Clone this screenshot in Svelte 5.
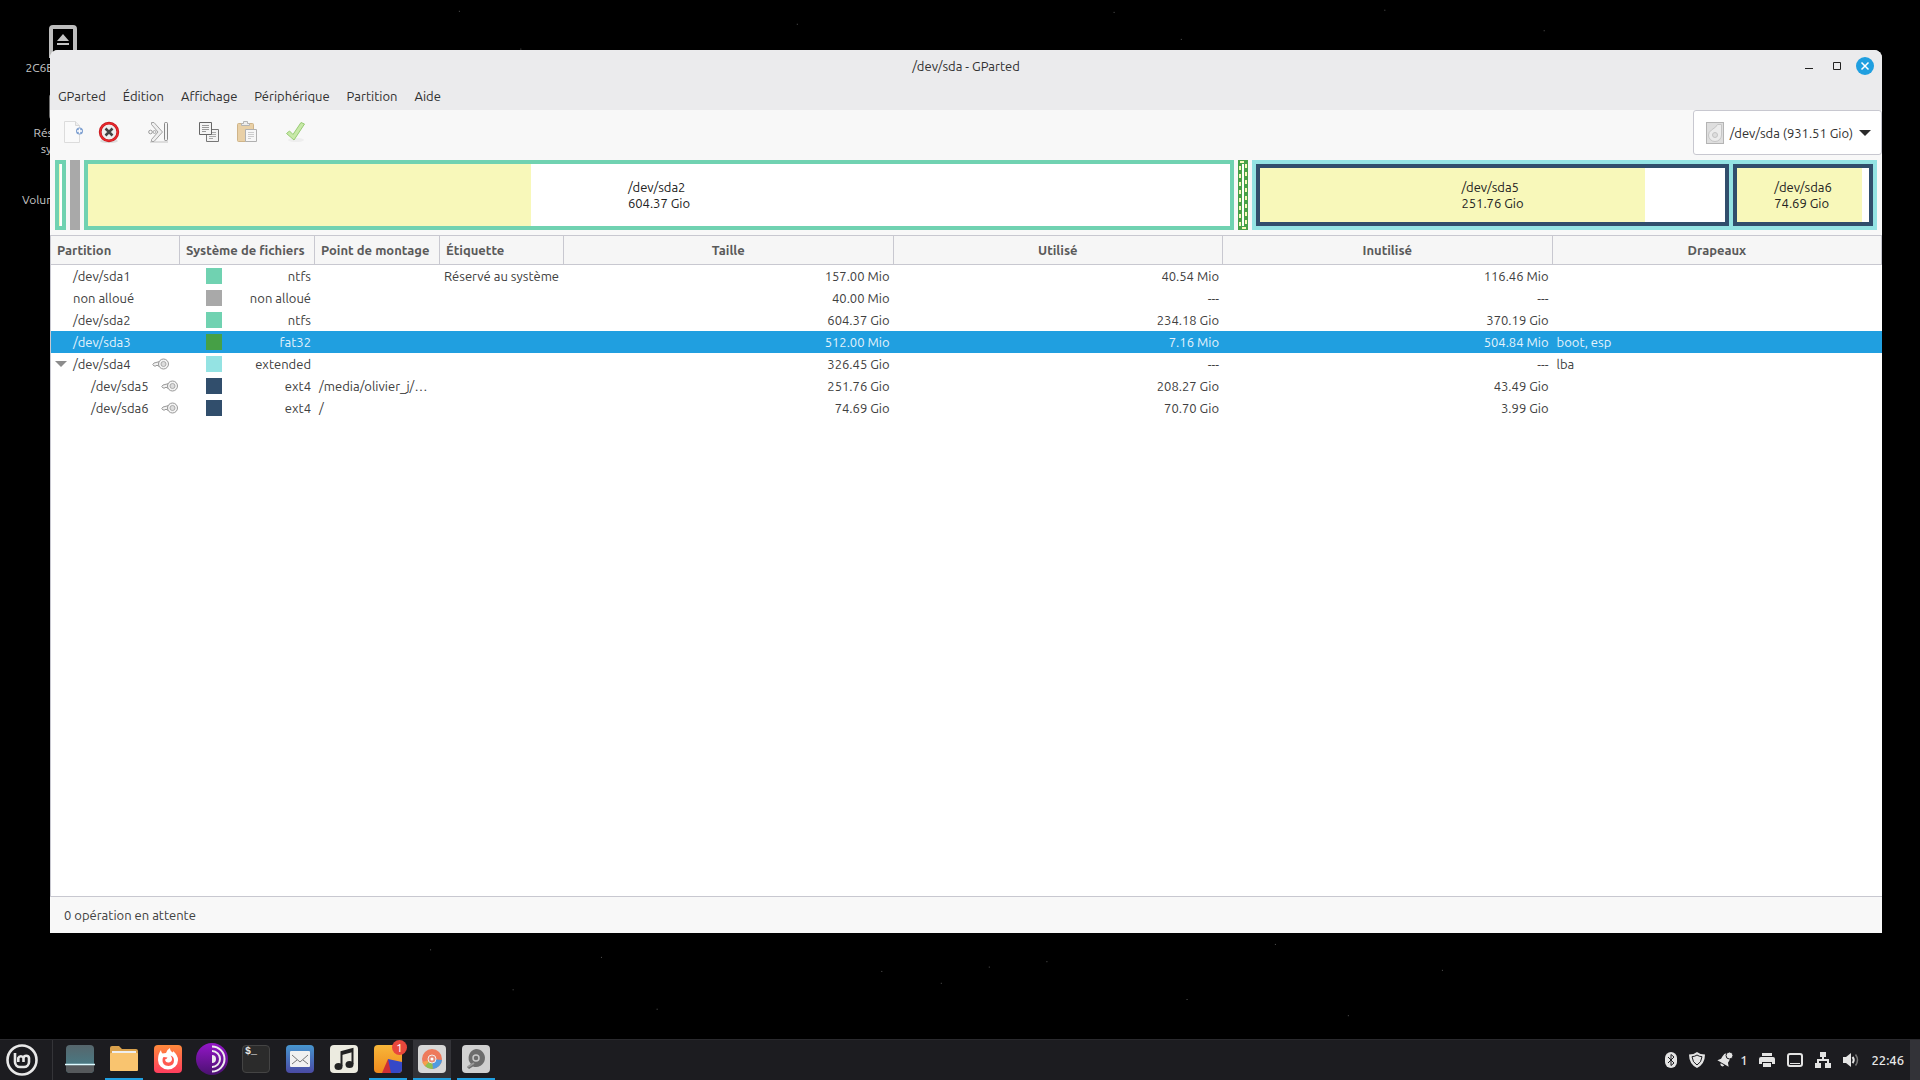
<script lang="ts">
	interface Row {
		name: string;
		depth: number;
		locked?: boolean;
		expander?: boolean;
		selected?: boolean;
		fs: string;
		color: string;
		mount?: string;
		label?: string;
		size: string;
		used: string;
		unused: string;
		flags?: string;
	}

	const menus = ['GParted', 'Édition', 'Affichage', 'Périphérique', 'Partition', 'Aide'];

	const rows: Row[] = [
		{ name: '/dev/sda1', depth: 0, fs: 'ntfs', color: '#70d2b1', label: 'Réservé au système', size: '157.00 Mio', used: '40.54 Mio', unused: '116.46 Mio' },
		{ name: 'non alloué', depth: 0, fs: 'non alloué', color: '#a9a9a9', size: '40.00 Mio', used: '---', unused: '---' },
		{ name: '/dev/sda2', depth: 0, fs: 'ntfs', color: '#70d2b1', size: '604.37 Gio', used: '234.18 Gio', unused: '370.19 Gio' },
		{ name: '/dev/sda3', depth: 0, selected: true, fs: 'fat32', color: '#46a046', size: '512.00 Mio', used: '7.16 Mio', unused: '504.84 Mio', flags: 'boot, esp' },
		{ name: '/dev/sda4', depth: 0, locked: true, expander: true, fs: 'extended', color: '#94e3e3', size: '326.45 Gio', used: '---', unused: '---', flags: 'lba' },
		{ name: '/dev/sda5', depth: 1, locked: true, fs: 'ext4', color: '#314e6c', mount: '/media/olivier_j/…', size: '251.76 Gio', used: '208.27 Gio', unused: '43.49 Gio' },
		{ name: '/dev/sda6', depth: 1, locked: true, fs: 'ext4', color: '#314e6c', mount: '/', size: '74.69 Gio', used: '70.70 Gio', unused: '3.99 Gio' },
	];

	// faint stars of the wallpaper, in percent of the screen
	const stars = [
		[23.9, 1], [27.1, 4.5], [41.5, 2.2], [58, 1.1], [61.5, 3.6], [72.1, 0.9], [80.4, 2.8], [22.4, 87.9],
		[26.7, 91.6], [31.3, 88.6], [34.2, 93.4], [45.9, 89.9], [49, 91], [51.5, 89.5], [54.5, 89],
		[61.8, 92.5], [66.4, 87.4], [70.2, 94], [75.1, 89.8],
	];
</script>

<svelte:head>
	<title>/dev/sda - GParted</title>
</svelte:head>

<div class="desktop">
	<svg class="stars" aria-hidden="true">
		{#each stars as [x, y]}
			<rect x="{x}%" y="{y}%" width="1" height="1" fill="#555" />
		{/each}
	</svg>

	<div class="launchers">
		<div class="launcher">
			<svg width="28" height="33" viewBox="0 0 28 33">
				<rect x="2" y="2" width="24" height="42" rx="2" fill="none" stroke="#bdbdbd" stroke-width="4" />
				<path d="M14 9l6 7H8zM8 18h12v2H8z" fill="#c4c4c4" />
			</svg>
			<span>2C6E1C5F6E1</span>
		</div>
		<div class="launcher">
			<svg width="28" height="33" viewBox="0 0 28 33">
				<rect x="2" y="4" width="24" height="24" rx="2" fill="none" stroke="#bdbdbd" stroke-width="4" />
			</svg>
			<span>Réservé au<br />système</span>
		</div>
		<div class="launcher bare">
			<span>Volume 120 Go</span>
		</div>
	</div>

	<main class="window">
		<header class="titlebar">
			<h1>/dev/sda - GParted</h1>
			<div class="controls">
				<button aria-label="Réduire"><svg width="18" height="18"><path d="M5 11.500h8" stroke="#222" /></svg></button>
				<button aria-label="Agrandir"><svg width="18" height="18"><path d="M5.500 5.500h7v7h-7z" fill="none" stroke="#222" /></svg></button>
				<button aria-label="Fermer">
					<svg width="18" height="18"><circle cx="9" cy="9" r="9" fill="#209fe0" /><path d="M5.500 5.500l7 7M12.500 5.500l-7 7" stroke="#fff" stroke-width="1.500" /></svg>
				</button>
			</div>
		</header>

		<nav class="menubar">
			{#each menus as menu}
				<button>{menu}</button>
			{/each}
		</nav>

		<div class="toolbar">
			<div class="tools">
				<button aria-label="Nouveau" disabled>
					<svg width="24" height="24" viewBox="0 0 24 24">
						<path d="M3.500 1.500h11l4 4v17h-15z" fill="#fafafa" stroke="#dcdcdc" />
						<path d="M14.500 1.500v4h4" fill="#eee" stroke="#d8d8d8" />
						<circle cx="18.500" cy="11" r="3.500" fill="#7d9fd0" />
						<path d="M18.500 8.500v5M16 11h5" stroke="#fff" stroke-width="1.500" />
					</svg>
				</button>
				<button class="second" aria-label="Supprimer">
					<svg width="24" height="24" viewBox="0 0 24 24">
						<ellipse cx="12" cy="21" rx="9" ry="2" fill="#ddd" />
						<circle cx="12" cy="12" r="8.800" fill="#eee" stroke="#c4161c" stroke-width="2.800" />
						<circle cx="12" cy="12" r="8.800" fill="none" stroke="#e8282c" stroke-width="1.500" />
						<path d="M8.500 8.500l7 7M15.500 8.500l-7 7" stroke="#444" stroke-width="2.500" />
					</svg>
				</button>
				<button class="third" aria-label="Redimensionner/Déplacer" disabled>
					<svg width="24" height="24" viewBox="0 0 24 24">
						<path d="M4 22h18" stroke="#ddd" stroke-width="2" />
						<path d="M5.500 2.500h2.500l8.500 9.500-8.500 9.500H5.500v-2l6.500-7.500-6.500-7.500z" fill="#efefef" stroke="#a4a4a4" />
						<circle cx="4.500" cy="12" r="1.800" fill="none" stroke="#999" />
						<circle cx="8.500" cy="12" r="1.500" fill="#eee" stroke="#aaa" />
						<rect x="18.500" y="2.500" width="3" height="18" rx="1" fill="#f4f4f4" stroke="#888" />
					</svg>
				</button>
				<button class="fourth" aria-label="Copier" disabled>
					<svg width="24" height="24" viewBox="0 0 24 24">
						<path d="M9.500 9.500h12v12h-12z" fill="#f4f4f4" stroke="#777" />
						<path d="M12 12.500h7M12 14.500h7M12 16.500h7M12 18.500h4" stroke="#aaa" />
						<path d="M2.500 2.500h12v12h-12z" fill="#f4f4f4" stroke="#666" />
						<path d="M5 5.500h7M5 7.500h7M5 9.500h7M5 11.500h4" stroke="#999" />
					</svg>
				</button>
				<button class="fifth" aria-label="Coller" disabled>
					<svg width="24" height="24" viewBox="0 0 24 24">
						<rect x="2.500" y="3.500" width="16" height="18" rx="1" fill="#e9d0a6" stroke="#cfb489" />
						<path d="M6.500 5.500v-2h2v-2h4v2h2v2z" fill="#eee" stroke="#b4b4b4" />
						<path d="M10.500 9.500h11v12h-11z" fill="#f7f7f7" stroke="#b0b0b0" />
						<path d="M13 12.500h6M13 14.500h6M13 16.500h6M13 18.500h3" stroke="#ccc" />
					</svg>
				</button>
				<button class="third" aria-label="Appliquer" disabled>
					<svg width="24" height="24" viewBox="0 0 24 24">
						<ellipse cx="12" cy="20" rx="8" ry="2" fill="#eee" />
						<path d="M2.500 13.500l3-2.500 3.500 3.500 8-12 3.500 1.500-10.500 16z" fill="#c8e9a8" stroke="#98cc74" stroke-linejoin="round" />
					</svg>
				</button>
			</div>
			<button class="device" aria-haspopup="listbox">
				<svg width="18" height="22" viewBox="0 0 18 22">
					<rect x=".5" y=".5" width="17" height="21" fill="#dedede" stroke="#b4b4b4" />
					<path d="M15.500 2.500V13a6.500 6.500 0 0 1-13 0q0-3 3-5 5-3 6-5.500z" fill="#ececec" stroke="#c6c6c6" />
					<circle cx="9" cy="13" r="2.500" fill="#dedede" stroke="#c4c4c4" />
				</svg>
				<span>/dev/sda (931.51 Gio)</span>
				<svg width="12" height="8"><path d="M0 1h12l-6 6z" fill="#2a2a2a" /></svg>
			</button>
		</div>

		<div class="disk">
			<div class="part ntfs tiny">
				<div class="used" style:width="25.8%"></div>
			</div>
			<div class="part free"></div>
			<div class="part ntfs sda2">
				<div class="used" style:width="38.8%"></div>
				<p>/dev/sda2<br />604.37 Gio</p>
			</div>
			<div class="part sda3">
				<svg width="10" height="70">
					<rect x="4" y="4" width="2" height="62" fill="#fff" />
					<rect x="2" y="2" width="6" height="66" fill="none" stroke="#f8f8ba" stroke-width="2" stroke-dasharray="4 4" />
				</svg>
			</div>
			<div class="part extended">
				<div class="part ext4 sda5">
					<div class="used" style:width="82.7%"></div>
					<p>/dev/sda5<br />251.76 Gio</p>
				</div>
				<div class="part ext4 sda6">
					<div class="used" style:width="94.7%"></div>
					<p>/dev/sda6<br />74.69 Gio</p>
				</div>
			</div>
		</div>

		<div class="list">
			<table>
				<colgroup>
					<col class="c-name" />
					<col class="c-fs" />
					<col class="c-mount" />
					<col class="c-label" />
					<col class="c-size" />
					<col class="c-used" />
					<col class="c-size" />
					<col class="c-used" />
				</colgroup>
				<thead>
					<tr>
						<th>Partition</th>
						<th>Système de fichiers</th>
						<th>Point de montage</th>
						<th>Étiquette</th>
						<th class="center">Taille</th>
						<th class="center">Utilisé</th>
						<th class="center">Inutilisé</th>
						<th class="center">Drapeaux</th>
					</tr>
				</thead>
				<tbody>
					{#each rows as row}
						<tr class:selected={row.selected}>
							<td>
								<div class="name" class:child={row.depth > 0}>
									<span class="expander">
										{#if row.expander}
											<svg width="12" height="8"><path d="M0 1h12l-6 6z" fill="#8c8c8c" /></svg>
										{/if}
									</span>
									<span>{row.name}</span>
									{#if row.locked}
										<svg class="key" width="18" height="12" viewBox="0 0 18 12">
											<path d="M8 3.500L2 5 .8 6.500 2 8h2l1-1 1 1h2" fill="#f3f3f3" stroke="#999" />
											<circle cx="11.500" cy="6" r="5" fill="#f3f3f3" stroke="#999" />
											<circle cx="11.500" cy="6" r="2.500" fill="#ddd" stroke="#aaa" />
										</svg>
									{/if}
								</div>
							</td>
							<td>
								<div class="fs">
									<span class="swatch" style:background={row.color}></span>
									<span>{row.fs}</span>
								</div>
							</td>
							<td>{row.mount ?? ''}</td>
							<td>{row.label ?? ''}</td>
							<td class="num">{row.size}</td>
							<td class="num">{row.used}</td>
							<td class="num">{row.unused}</td>
							<td>{row.flags ?? ''}</td>
						</tr>
					{/each}
				</tbody>
			</table>
		</div>

		<footer class="statusbar">0 opération en attente</footer>
	</main>

	<footer class="panel">
		<button class="mint" aria-label="Menu">
			<svg width="32" height="32" viewBox="0 0 32 32" fill="none" stroke="#e8e8e8">
				<circle cx="16" cy="16" r="14.500" stroke-width="2.600" />
				<path d="M9 9v9a5 5 0 0 0 5 5h4a5 5 0 0 0 5-5v-4a2.800 2.800 0 0 0-5.500 0v4M17.500 14a2.800 2.800 0 0 0-5.200 0v4" stroke-width="2.600" />
			</svg>
		</button>
		<div class="tasks">
			<button aria-label="Bureau">
				<svg width="30" height="30" viewBox="0 0 30 30">
					<defs><linearGradient id="desk" x2="0" y2="1"><stop stop-color="#56666c" /><stop offset="1" stop-color="#44808c" /></linearGradient></defs>
					<rect x="1" y="1" width="28" height="28" rx="4" fill="url(#desk)" />
					<path d="M1 21h28v4a4 4 0 0 1-4 4H5a4 4 0 0 1-4-4z" fill="#56595c" />
					<path d="M0 20.500h30" stroke="#dffaff" stroke-width="1.500" />
				</svg>
			</button>
			<button class="open" aria-label="Fichiers">
				<svg width="30" height="30" viewBox="0 0 30 30">
					<path d="M1 4q0-2 2-2h7l3 3h14q2 0 2 2v6H1z" fill="#d9a14c" />
					<path d="M3 7h24v5H3z" fill="#eee" />
					<path d="M1 10q0-1 1-1h26q1 0 1 1v16q0 1-1 1H2q-1 0-1-1z" fill="#f9c46f" />
				</svg>
			</button>
			<button aria-label="Firefox">
				<svg width="30" height="30" viewBox="0 0 30 30">
					<defs><linearGradient id="fox" x2="0" y2="1"><stop stop-color="#ff8a3c" /><stop offset="1" stop-color="#ff3d5e" /></linearGradient></defs>
					<rect x="1" y="1" width="28" height="28" rx="4" fill="url(#fox)" />
					<path d="M8 6q0 2 1.500 3.500L13 9q1-3.500 4-5 0 3 3 4.500V7q5 4 5 9a10 9.500 0 0 1-20 0q0-6 3-10z" fill="#fff" />
					<path d="M10.500 13l4 .5q-1 2-2.500 2 .5 3.500 4 3 3-.8 3-3.500 0-2-1.500-3.500 3.500 1 3.500 5 0 5-5.500 5.500Q9 21.500 9.500 16q0-2 1-3z" fill="#ff5a50" />
				</svg>
			</button>
			<button aria-label="Tor">
				<svg width="32" height="32" viewBox="0 0 32 32">
					<defs><linearGradient id="tor" x2="0" y2="1"><stop stop-color="#9416c8" /><stop offset="1" stop-color="#4a1170" /></linearGradient></defs>
					<circle cx="16" cy="16" r="16" fill="url(#tor)" />
					<path d="M16 3.500a12.500 12.500 0 0 1 0 25M16 8a8 8 0 0 1 0 16" fill="none" stroke="#eee" stroke-width="2" />
					<path d="M16 12a4 4 0 0 1 0 8z" fill="#eee" />
				</svg>
			</button>
			<button aria-label="Terminal">
				<span class="term">$_</span>
			</button>
			<button aria-label="Courriel">
				<svg width="30" height="30" viewBox="0 0 30 30">
					<defs><linearGradient id="mail" x2="0" y2="1"><stop stop-color="#4796cf" /><stop offset="1" stop-color="#4a4aa4" /></linearGradient></defs>
					<rect x="1" y="1" width="28" height="28" rx="4" fill="url(#mail)" />
					<rect x="5" y="7" width="20" height="16" rx="1" fill="#f1f1f1" />
					<path d="M7 11l8 7 8-7M7 20l5-4M23 20l-5-4" fill="none" stroke="#777" />
				</svg>
			</button>
			<button aria-label="Musique">
				<svg width="30" height="30" viewBox="0 0 30 30">
					<rect x="1" y="1" width="28" height="28" rx="4" fill="#ecebe0" />
					<path d="M12.500 22V8l11-3v15" fill="none" stroke="#222" stroke-width="2" />
					<path d="M12.500 9.500l11-3" stroke="#222" stroke-width="3" />
					<ellipse cx="9.500" cy="22.500" rx="4" ry="3.500" fill="#222" />
					<ellipse cx="20.500" cy="20.500" rx="4" ry="3.500" fill="#222" />
				</svg>
			</button>
			<button class="open" aria-label="Analyseur d'espace disque">
				<svg width="30" height="30" viewBox="0 0 30 30">
					<defs><linearGradient id="pie" x2="0" y2="1"><stop stop-color="#f8b73a" /><stop offset="1" stop-color="#f08a1c" /></linearGradient></defs>
					<rect x="1" y="1" width="28" height="28" rx="4" fill="url(#pie)" />
					<path d="M15 15l14 3v7a4 4 0 0 1-4 4H15z" fill="#3548c8" />
					<path d="M15 15l3 14H9z" fill="#cf2f35" />
				</svg>
				<span class="badge">1</span>
			</button>
			<button class="open active" aria-label="GParted">
				<svg width="30" height="30" viewBox="0 0 30 30">
					<rect x="1" y="1" width="28" height="28" rx="4" fill="#d8d8d8" />
					<circle cx="15" cy="15" r="10" fill="#ee7a5c" />
					<path d="M15 15L5.500 18a10 10 0 0 0 2.500 4z" fill="#f5a04c" />
					<path d="M15 15L8 22a10 10 0 0 0 8 3z" fill="#8cc152" />
					<path d="M15 15l1 10a10 10 0 0 0 9-9z" fill="#4f9be0" />
					<circle cx="15" cy="15" r="4" fill="#e98973" stroke="#eee" />
					<circle cx="15" cy="15" r="1.500" fill="#fff" />
				</svg>
			</button>
			<button class="open" aria-label="Disques">
				<svg width="30" height="30" viewBox="0 0 30 30">
					<rect x="1" y="1" width="28" height="28" rx="4" fill="#d0d0d0" />
					<path d="M15 5a9 9 0 1 1-3 17.500L8 25l-2-2 4-3A9 9 0 0 1 15 5z" fill="#6c6c6c" />
					<circle cx="15" cy="14" r="3" fill="none" stroke="#c8c8c8" stroke-width="1.500" />
					<path d="M7 23l6-4" stroke="#999" stroke-width="2" />
				</svg>
			</button>
		</div>

		<div class="tray">
			<button aria-label="Bluetooth">
				<svg width="12" height="16" viewBox="0 0 12 16"><rect width="12" height="16" rx="6" fill="#e4e4e4" /><path d="M3 5l6 6-3 2.500v-11L9 5l-6 6" fill="none" stroke="#1c1c20" /></svg>
			</button>
			<button aria-label="Mises à jour">
				<svg width="16" height="16" viewBox="0 0 16 16"><path d="M8 0q3 2.500 8 2.500Q16 12 8 16 0 12 0 2.500 5 2.500 8 0z" fill="#e4e4e4" /><path d="M8 3q2 1.500 5 1.700Q12.500 10.500 8 13 3.500 10.500 3 4.700 6 4.500 8 3z" fill="#e4e4e4" stroke="#1c1c20" /></svg>
			</button>
			<button class="notify">
				<svg width="16" height="16" viewBox="0 0 16 16" fill="#e4e4e4">
					<path d="M8 1q4 0 4 5v3l2.500 3h-13L4 9V6q0-5 4-5zM6 13h4q0 2-2 2t-2-2z" transform="rotate(30 8 8)" />
					<circle cx="12.500" cy="3.500" r="3.500" stroke="#1c1c20" />
				</svg>
				<span>1</span>
			</button>
			<button aria-label="Imprimantes">
				<svg width="16" height="16" viewBox="0 0 16 16" fill="#e4e4e4"><path d="M3 1h10v3H3zM2 5h12q2 0 2 2v5h-3v-2H3v2H0V7q0-2 2-2zM4 11h8v4H4z" /></svg>
			</button>
			<button aria-label="Bureau">
				<svg width="16" height="16" viewBox="0 0 16 16"><rect x="1" y="2" width="14" height="12" rx="2" fill="none" stroke="#e4e4e4" stroke-width="2" /><path d="M3 11.500h10" stroke="#e4e4e4" /></svg>
			</button>
			<button aria-label="Réseau">
				<svg width="16" height="16" viewBox="0 0 16 16" fill="#e4e4e4"><path d="M5 0h6v5H9v2h5v4h2v5h-6v-5h2V9H4v2h2v5H0v-5h2V7h5V5H5z" /></svg>
			</button>
			<button aria-label="Volume">
				<svg width="16" height="16" viewBox="0 0 16 16"><path d="M0 5h3l5-4v14l-5-4H0z" fill="#e4e4e4" /><path d="M9.500 5q2.500 3 0 6" fill="none" stroke="#e4e4e4" stroke-width="2" /><path d="M12.500 2.500q4 5.500 0 11" fill="none" stroke="#777" stroke-width="1.500" /></svg>
			</button>
			<time>22:46</time>
		</div>
		<button class="corner" aria-label="Afficher le bureau"></button>
	</footer>
</div>

<style>
	:global(body) {
		margin: 0;
		background: #000;
	}

	.desktop {
		position: relative;
		display: flex;
		flex-direction: column;
		min-height: 100vh;
		overflow: hidden;
		background: #000;
		color: #303030;
		font-family: Ubuntu, 'Noto Sans', sans-serif;
		font-size: 13px;
	}

	button {
		margin: 0;
		padding: 0;
		border: 0;
		background: none;
		color: inherit;
		font: inherit;
	}

	svg {
		display: block;
	}

	.stars {
		position: absolute;
		inset: 0;
		width: 100%;
		height: 100%;
	}

	/* desktop icons, half hidden behind the window */
	.launchers {
		position: absolute;
		top: 25px;
		left: 0;
		width: 126px;
		color: #c8c8c8;
		font-size: 12px;
		line-height: 16px;
		text-align: center;
	}

	.launcher {
		display: flex;
		flex-direction: column;
		align-items: center;
		gap: 2px;
		height: 66px;
	}

	.bare {
		padding-top: 35px;
	}

	.window {
		position: relative;
		display: flex;
		flex: 1;
		flex-direction: column;
		margin: 50px 38px 106px 50px;
		overflow: hidden;
		border-radius: 8px 8px 0 0;
		background: #f8f8f8;
	}

	.titlebar {
		display: grid;
		grid-template-columns: 1fr auto 1fr;
		align-items: center;
		height: 32px;
		background: #ebebed;
	}

	h1 {
		grid-column: 2;
		margin: 0;
		font-size: 13px;
		font-weight: 400;
	}

	.controls {
		display: flex;
		justify-content: flex-end;
		gap: 10px;
		padding-right: 8px;
	}

	.menubar {
		display: flex;
		align-items: center;
		gap: 17px;
		height: 28px;
		padding-left: 8px;
		background: #ebebed;
	}

	.toolbar {
		display: flex;
		justify-content: space-between;
		height: 50px;
	}

	.tools {
		display: flex;
		align-items: flex-start;
		padding: 10px 0 0 11px;
	}

	.second {
		margin-left: 12px;
	}

	.third {
		margin-left: 25px;
	}

	.fourth {
		margin-left: 27px;
	}

	.fifth {
		margin-left: 14px;
	}

	.device {
		display: flex;
		align-items: center;
		gap: 6px;
		height: 45px;
		padding: 0 10px 0 12px;
		border: 1px solid #c8c8d0;
		border-radius: 3px;
		background: #fff;
		line-height: 16px;
	}

	.disk {
		display: flex;
		gap: 4px;
		height: 70px;
		padding: 0 5px;
		color: #222;
	}

	.part {
		position: relative;
		display: flex;
		align-items: center;
		justify-content: center;
		box-sizing: border-box;
		background: #fff;
	}

	.part p {
		position: relative;
		margin: 0;
		line-height: 16px;
	}

	/* fill behind the partition's caption */
	.used {
		position: absolute;
		inset: 0 auto 0 0;
		background: #f8f8ba;
	}

	.ntfs {
		border: 4px solid #70d2b1;
	}

	.tiny {
		width: 11px;
	}

	.free {
		width: 10px;
		background: #a9a9a9;
	}

	.sda2 {
		flex: 1142;
	}

	.sda3 {
		width: 10px;
		background: #46a046;
	}

	.extended {
		flex: 617;
		align-items: stretch;
		gap: 4px;
		padding: 4px;
		background: #94e3e3;
	}

	.ext4 {
		border: 4px solid #314e6c;
	}

	.sda5 {
		flex: 465;
	}

	.sda6 {
		flex: 132;
	}

	.list {
		flex: 1;
		margin-top: 5px;
		border: 1px solid #c8c8d0;
		border-right-width: 0;
		background: #fff;
	}

	table {
		width: 100%;
		border-collapse: separate;
		border-spacing: 0;
		table-layout: fixed;
		color: #404040;
	}

	.c-name {
		width: 129px;
	}

	.c-fs {
		width: 135px;
	}

	.c-mount {
		width: 125px;
	}

	.c-label {
		width: 124px;
	}

	.c-size {
		width: 18%;
	}

	.c-used {
		width: auto;
	}

	th {
		height: 28px;
		padding: 0 6px;
		border-right: 1px solid #c8c8d0;
		border-bottom: 1px solid #c8c8d0;
		background: #f6f6f6;
		color: #5a5a5a;
		font-size: 13px;
		font-weight: 700;
		line-height: 16px;
		text-align: left;
		white-space: nowrap;
	}

	th.center {
		text-align: center;
	}

	td {
		height: 22px;
		padding: 0 4px;
		line-height: 16px;
		white-space: nowrap;
	}

	.num {
		text-align: right;
	}

	.selected td {
		background: #209fe0;
		color: #e4f3fc;
	}

	.name {
		display: flex;
		align-items: center;
	}

	.expander {
		width: 18px;
	}

	.child {
		padding-left: 18px;
	}

	.key {
		margin-left: auto;
		margin-right: 6px;
	}

	.child .key {
		margin-right: -3px;
	}

	.fs {
		display: flex;
		align-items: center;
		justify-content: space-between;
		padding-left: 22px;
	}

	.swatch {
		width: 16px;
		height: 16px;
	}

	.statusbar {
		padding: 9px 14px;
		line-height: 18px;
		color: #404040;
	}

	.panel {
		position: relative;
		display: flex;
		height: 40px;
		border-top: 1px solid #2a2a2e;
		background: #1c1c20;
		color: #e8e8e8;
	}

	.mint {
		padding: 0 14px 0 6px;
		border-right: 1px solid #343438;
	}

	.tasks {
		display: flex;
		flex: 1;
		gap: 6px;
		padding-left: 8px;
	}

	.tasks button {
		position: relative;
		display: flex;
		align-items: center;
		justify-content: center;
		box-sizing: border-box;
		width: 38px;
		border-bottom: 2px solid transparent;
	}

	.tasks .open {
		border-color: #209fe0;
	}

	.tasks .active {
		background-color: #333338;
	}

	.term {
		box-sizing: border-box;
		width: 28px;
		height: 28px;
		padding-left: 2px;
		border: 1px solid #444;
		border-radius: 4px;
		background: #2b2b2b;
		font-family: 'Liberation Mono', monospace;
		font-size: 10px;
		font-weight: 700;
		text-align: left;
	}

	.badge {
		position: absolute;
		top: 0;
		right: 0;
		width: 15px;
		height: 15px;
		border-radius: 50%;
		background: #e8483c;
		color: #fff;
		font-size: 12px;
		line-height: 15px;
		text-align: center;
	}

	.tray {
		display: flex;
		align-items: center;
		gap: 12px;
		padding-right: 6px;
		font-weight: 500;
	}

	.notify {
		display: flex;
		align-items: center;
		gap: 7px;
	}

	.corner {
		width: 10px;
		background: #333338;
	}
</style>
